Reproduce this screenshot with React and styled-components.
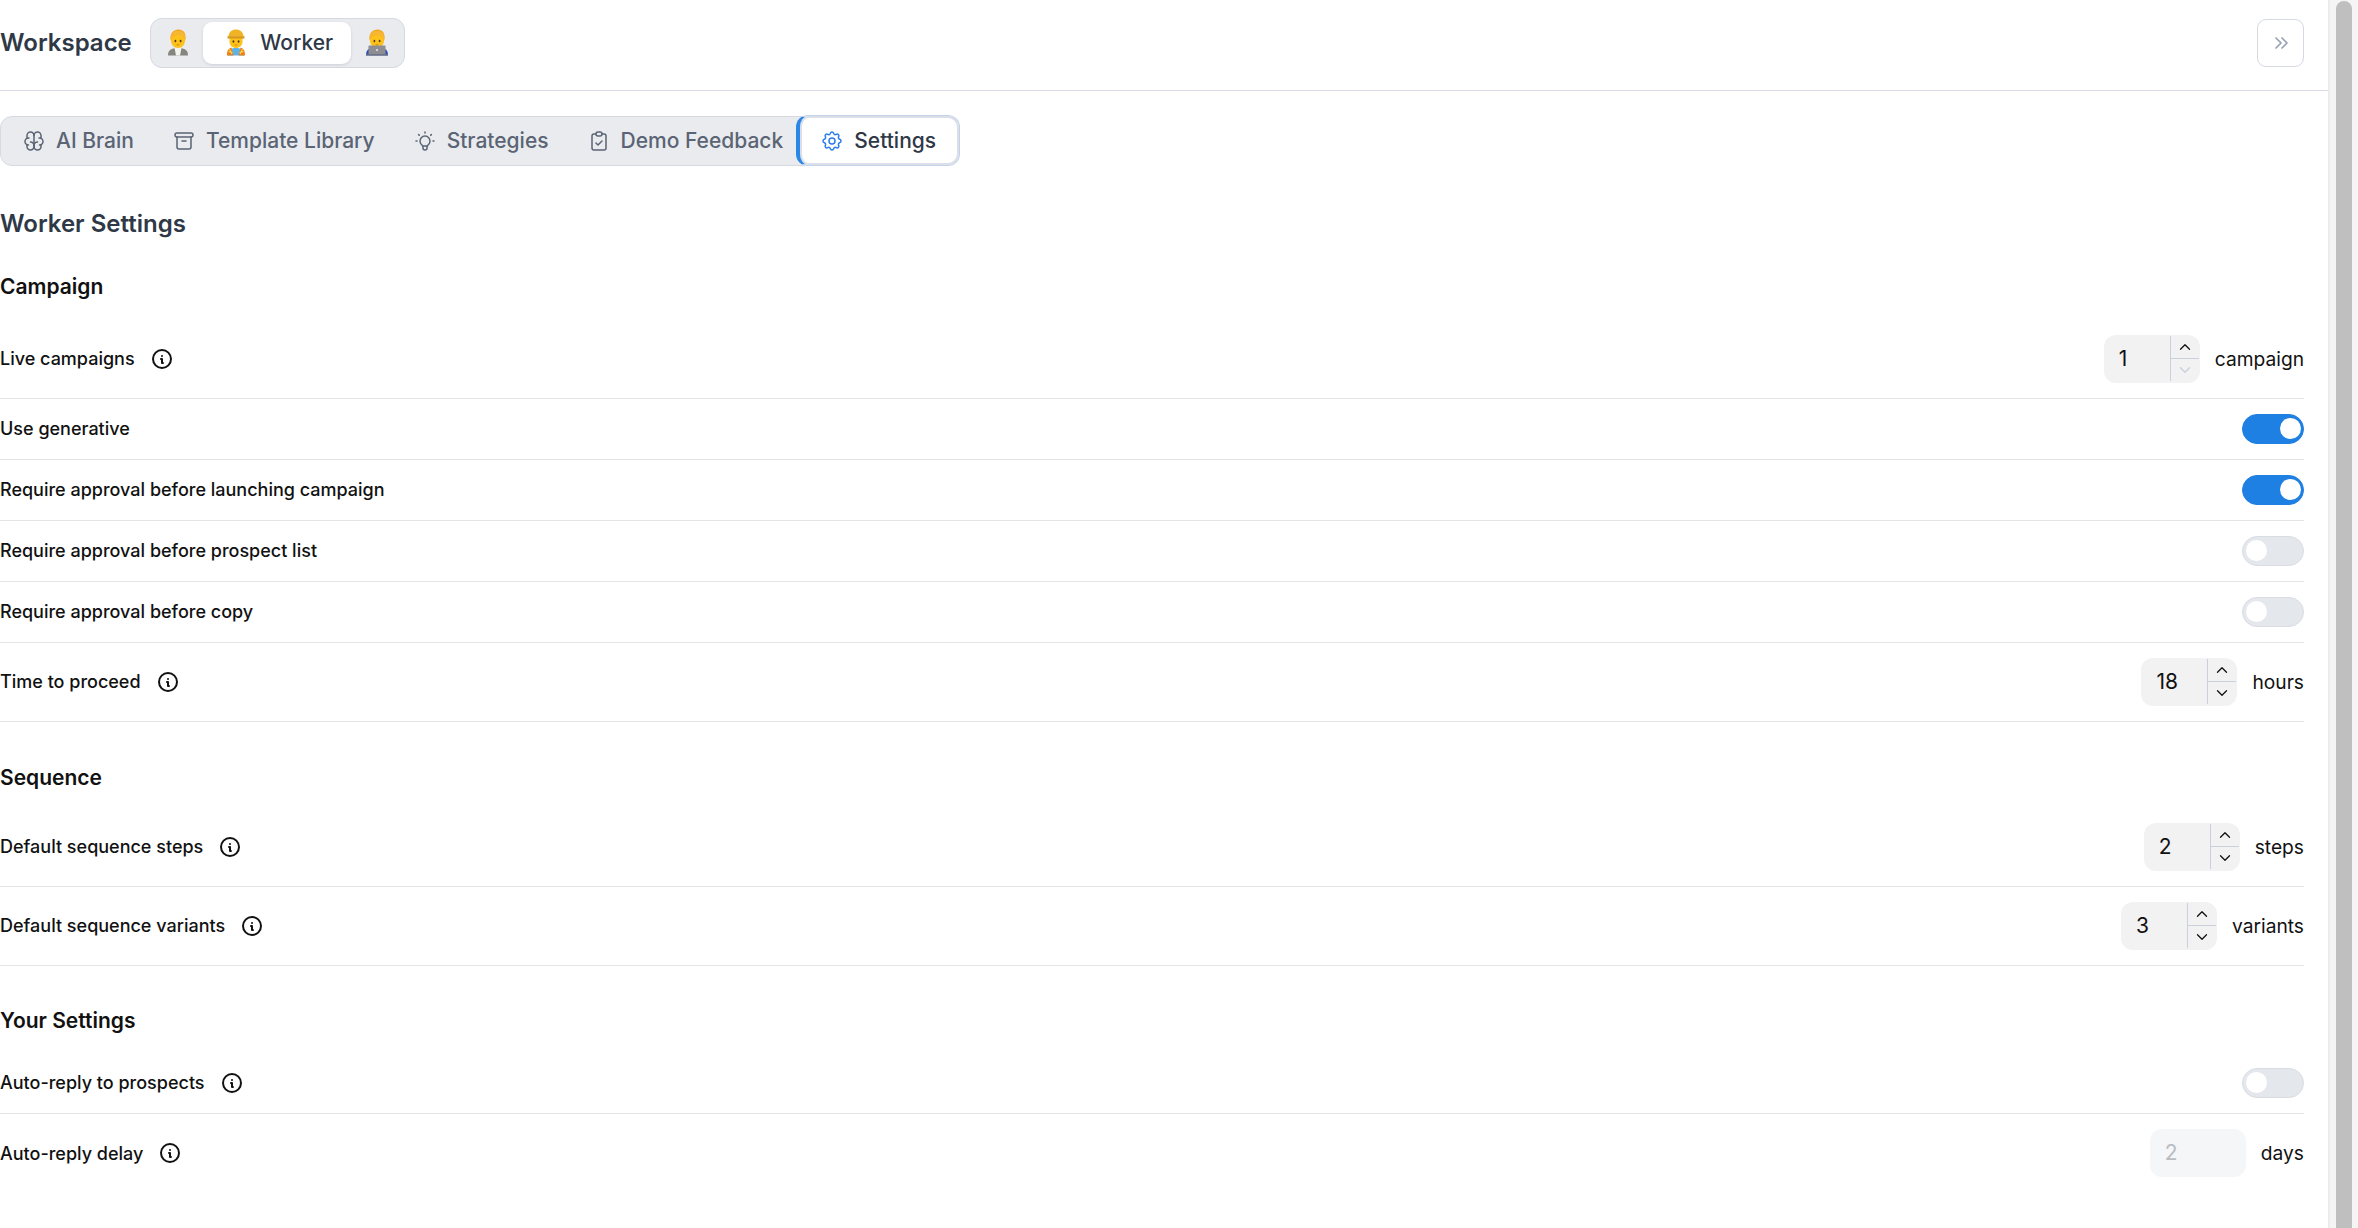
import React from "react";
import styled, { createGlobalStyle } from "styled-components";
import {
  TbArchive,
  TbBrain,
  TbBulb,
  TbChevronDown,
  TbChevronUp,
  TbChevronsRight,
  TbClipboardCheck,
  TbInfoCircle,
  TbSettings
} from "react-icons/tb";

const GlobalStyle = createGlobalStyle`
  html, body {
    margin: 0;
    padding: 0;
    height: 100%;
    background: #fff;
    overflow: hidden;
  }
  body {
    font-family: Inter, "Liberation Sans", sans-serif;
    color: #000;
  }
`;

const Page = styled.div`
  display: flex;
  height: 1228px;
`;

const Main = styled.main`
  flex: 1;
  min-width: 0;
  padding-right: 24px;
`;

const Scrollbar = styled.div`
  box-sizing: border-box;
  width: 30px;
  padding: 1px 6px 0 6px;
  background: #f5f5f5;
  border-left: 2px solid #ebebeb;
`;

const Thumb = styled.div`
  height: 100%;
  border-radius: 8px 8px 0 0;
  background: #bfbfbf;
`;

const Header = styled.header`
  display: flex;
  align-items: center;
  justify-content: space-between;
  box-sizing: border-box;
  height: 91px;
  margin-right: -24px;
  padding: 0 24px 4.5px 0;
  border-bottom: 1.5px solid #d9dae8;
`;

const HeaderLeft = styled.div`
  display: flex;
  align-items: center;
  gap: 18px;
`;

const Title = styled.h1`
  margin: 0;
  font-size: 24px;
  font-weight: 600;
  color: #2f3846;
`;

const Segments = styled.div`
  display: flex;
  align-items: center;
  box-sizing: border-box;
  height: 50px;
  padding: 0 1.5px;
  background: #e9ebef;
  border: 1.5px solid #d5d9e2;
  border-radius: 12px;
`;

const Segment = styled.div`
  display: flex;
  align-items: center;
  gap: 12px;
  height: 42px;
  box-sizing: border-box;
  padding: ${(p) => (p.$active ? "0 18px 0 21px" : "0 13.5px")};
  border-radius: 9px;
  background: ${(p) => (p.$active ? "#fff" : "transparent")};
  box-shadow: ${(p) => (p.$active ? "0 1px 3px rgba(16, 24, 40, 0.12)" : "none")};
  font-size: 21px;
  font-weight: 500;
  color: #2f3846;
`;

const CollapseButton = styled.button`
  display: flex;
  align-items: center;
  justify-content: center;
  width: 47px;
  height: 48px;
  padding: 0;
  background: #fff;
  border: 1.5px solid #d5d9e2;
  border-radius: 9px;
  color: #98a2b3;
  font-size: 24px;
  svg {
    stroke-width: 1.7;
  }
`;

const Tabs = styled.nav`
  display: flex;
  align-items: stretch;
  width: fit-content;
  height: 50px;
  margin-top: 24.5px;
  box-sizing: border-box;
  background: #e9ebef;
  border: 1.5px solid #d5d9e2;
  border-radius: 12px;
`;

const Tab = styled.div`
  display: flex;
  align-items: center;
  gap: 10px;
  padding: 0 ${(p) => (p.$last ? "13px" : "17px")} 0 21px;
  font-size: 21px;
  font-weight: 500;
  color: #5a6474;
  svg {
    font-size: 24px;
    stroke-width: 1.5;
  }
`;

const ActiveTab = styled(Tab)`
  box-sizing: border-box;
  margin: -1.5px -3px -1.5px 0;
  padding: 0 22.5px 0 20px;
  background: #fff;
  color: #2f3846;
  border: 1.5px solid #c3d3ea;
  border-left: 4px solid #2b87e6;
  border-radius: 12px;
  box-shadow: inset 0 0 0 2px #dcdfe7;
  svg {
    color: #2b7de9;
  }
`;

const Heading = styled.h2`
  margin: 43px 0 0;
  font-size: 24px;
  line-height: 30px;
  font-weight: 600;
  color: #2f3846;
`;

const SectionTitle = styled.h3`
  margin: ${(p) => p.$top}px 0 ${(p) => p.$bottom}px;
  font-size: 21px;
  line-height: 30px;
  font-weight: 600;
  color: #111;
`;

const Row = styled.div`
  display: flex;
  align-items: center;
  justify-content: space-between;
  box-sizing: border-box;
  height: ${(p) => p.$height}px;
  border-bottom: ${(p) => (p.$plain ? "none" : "1.5px solid #e3e4e6")};
`;

const LabelWrap = styled.div`
  display: flex;
  align-items: center;
  gap: 15px;
  font-size: 18px;
  font-weight: 500;
  color: #111;
`;

const InfoIcon = styled(TbInfoCircle)`
  font-size: 24px;
  flex-shrink: 0;
  color: #111;
`;

const Control = styled.div`
  display: flex;
  align-items: center;
  gap: 15px;
`;

const Unit = styled.span`
  font-size: 19.2px;
  font-weight: 400;
  color: #111;
`;

const NumberField = styled.div`
  display: flex;
  justify-content: space-between;
  box-sizing: border-box;
  width: 96px;
  height: 48px;
  padding-left: 15px;
  border-radius: 12px;
  background: ${(p) => (p.$disabled ? "#f5f6f8" : "#f2f2f3")};
  color: ${(p) => (p.$disabled ? "#b9bcc2" : "#111")};
  font-size: 21px;
  line-height: 48px;
`;

const Stepper = styled.div`
  display: flex;
  flex-direction: column;
  box-sizing: border-box;
  width: 29px;
  margin: 1px 1px 2px 0;
  border-left: 1.5px solid #c9cfdb;
`;

const StepButton = styled.div`
  flex: 1;
  display: flex;
  align-items: center;
  justify-content: center;
  font-size: 18px;
  color: ${(p) => (p.$muted ? "#c9cfdb" : "#111")};
  svg {
    stroke-width: 1.7;
  }
  & + & {
    border-top: 1.5px solid #c9cfdb;
  }
`;

const Track = styled.div`
  display: flex;
  align-items: center;
  justify-content: ${(p) => (p.$on ? "flex-end" : "flex-start")};
  box-sizing: border-box;
  width: 62px;
  height: 30px;
  padding: 0 2.5px;
  border-radius: 15px;
  background: ${(p) => (p.$on ? "#1f80e3" : "#e4e7ec")};
  border: 1.5px solid ${(p) => (p.$on ? "#1f80e3" : "#d9dde3")};
`;

const Knob = styled.div`
  width: 21px;
  height: 21px;
  border-radius: 50%;
  background: #fff;
`;

const EmojiSvg = styled.svg`
  display: block;
  width: 24px;
  height: 27px;
  flex-shrink: 0;
`;

// blond head shared by the office worker and technologist emojis
function Head() {
  return (
    <>
      <path d="M4.500 10C4 4 7.500 .6 12.500 .6S20 4 19.500 10l-1 3H5.500z" fill="#f2a51a" />
      <path d="M5 11.500C5 7.500 8 6 12 6s7 1.500 7 5.500c0 4.500-3.200 7.500-7 7.500s-7-3-7-7.500z" fill="#fcc21b" />
      <path d="M4.900 11c.4-3 1.800-4.500 4-5.200 3 .6 7.500 0 10.200 5.200C20.200 4.500 16.500 1.800 12.300 1.800 7.500 1.800 3.800 5 4.900 11z" fill="#f7b733" />
      <ellipse cx="9.400" cy="12" rx=".9" ry="1.300" fill="#5a3510" />
      <ellipse cx="14.600" cy="12" rx=".9" ry="1.300" fill="#5a3510" />
      <path d="M10.700 15.800h2.600" stroke="#b9740c" strokeWidth=".8" />
    </>
  );
}

function Manager() {
  return (
    <EmojiSvg viewBox="0 0 24 27" role="img" aria-label="Office worker">
      <path d="M2 26.500c0-5.500 3-7.500 10-7.500s10 2 10 7.500z" fill="#86867f" />
      <path d="M8.500 18.800h7L14 26.500h-4z" fill="#f4f4ef" />
      <Head />
    </EmojiSvg>
  );
}

function Builder() {
  return (
    <EmojiSvg viewBox="0 0 24 27" role="img" aria-label="Construction worker">
      <path d="M4 26.500c0-5.500 2-7.500 8-7.500s8 2 8 7.500z" fill="#5fb2e8" />
      <path d="M3 26.500c0-5 1.200-7 4.500-8l1.800 8zM21 26.500c0-5-1.200-7-4.500-8l-1.800 8z" fill="#ef7f1a" />
      <path d="M4.500 22.500l4 .8M19.500 22.500l-4 .8M5.500 20l2.300 5M18.500 20l-2.300 5" stroke="#f6e04a" strokeWidth="1" />
      <path d="M5.500 9h13v3.500c0 4-3 6.500-6.500 6.500s-6.500-2.500-6.500-6.500z" fill="#fcc21b" />
      <ellipse cx="9.400" cy="12.500" rx=".9" ry="1.300" fill="#5a3510" />
      <ellipse cx="14.600" cy="12.500" rx=".9" ry="1.300" fill="#5a3510" />
      <path d="M10.700 16h2.600" stroke="#b9740c" strokeWidth=".8" />
      <path d="M4.500 7.500C4.800 3 8 .6 12 .6s7.200 2.400 7.500 6.900z" fill="#f0b323" />
      <path d="M3.500 7.200h17v2.300h-17z" fill="#d8961a" />
    </EmojiSvg>
  );
}

function Technologist() {
  return (
    <EmojiSvg viewBox="0 0 24 27" role="img" aria-label="Technologist">
      <path d="M1 26.500c0-4 1.500-7 5-7h12c3.500 0 5 3 5 7z" fill="#2f4fb0" />
      <Head />
      <rect x="3.500" y="16.500" width="17" height="9" rx=".8" fill="#8d8d92" />
      <circle cx="12" cy="21" r="1" fill="#e8e8ea" />
      <path d="M1 25.200h22v1.300H1z" fill="#77777c" />
    </EmojiSvg>
  );
}

function Toggle({ on }) {
  return (
    <Track $on={on}>
      <Knob />
    </Track>
  );
}

function NumberInput({ value, unit, disabled, downMuted }) {
  return (
    <Control>
      <NumberField $disabled={disabled}>
        {value}
        {!disabled && (
          <Stepper>
            <StepButton>
              <TbChevronUp />
            </StepButton>
            <StepButton $muted={downMuted}>
              <TbChevronDown />
            </StepButton>
          </Stepper>
        )}
      </NumberField>
      <Unit>{unit}</Unit>
    </Control>
  );
}

function Label({ children, info }) {
  return (
    <LabelWrap>
      {children}
      {info && <InfoIcon />}
    </LabelWrap>
  );
}

export default function App() {
  return (
    <>
      <GlobalStyle />
      <Page>
        <Main>
          <Header>
            <HeaderLeft>
              <Title>Workspace</Title>
              <Segments>
                <Segment>
                  <Manager />
                </Segment>
                <Segment $active>
                  <Builder />
                  Worker
                </Segment>
                <Segment>
                  <Technologist />
                </Segment>
              </Segments>
            </HeaderLeft>
            <CollapseButton>
              <TbChevronsRight />
            </CollapseButton>
          </Header>

          <Tabs>
            <Tab>
              <TbBrain />
              AI Brain
            </Tab>
            <Tab>
              <TbArchive />
              Template Library
            </Tab>
            <Tab>
              <TbBulb />
              Strategies
            </Tab>
            <Tab $last>
              <TbClipboardCheck />
              Demo Feedback
            </Tab>
            <ActiveTab>
              <TbSettings />
              Settings
            </ActiveTab>
          </Tabs>

          <Heading>Worker Settings</Heading>

          <SectionTitle $top={33} $bottom={18}>Campaign</SectionTitle>
          <Row $height={79}>
            <Label info>Live campaigns</Label>
            <NumberInput value="1" unit="campaign" downMuted />
          </Row>
          <Row $height={61}>
            <Label>Use generative</Label>
            <Toggle on />
          </Row>
          <Row $height={61}>
            <Label>Require approval before launching campaign</Label>
            <Toggle on />
          </Row>
          <Row $height={61}>
            <Label>Require approval before prospect list</Label>
            <Toggle />
          </Row>
          <Row $height={61}>
            <Label>Require approval before copy</Label>
            <Toggle />
          </Row>
          <Row $height={79}>
            <Label info>Time to proceed</Label>
            <NumberInput value="18" unit="hours" />
          </Row>

          <SectionTitle $top={41} $bottom={15}>Sequence</SectionTitle>
          <Row $height={79}>
            <Label info>Default sequence steps</Label>
            <NumberInput value="2" unit="steps" />
          </Row>
          <Row $height={79}>
            <Label info>Default sequence variants</Label>
            <NumberInput value="3" unit="variants" />
          </Row>

          <SectionTitle $top={40} $bottom={17}>Your Settings</SectionTitle>
          <Row $height={61}>
            <Label info>Auto-reply to prospects</Label>
            <Toggle />
          </Row>
          <Row $height={79} $plain>
            <Label info>Auto-reply delay</Label>
            <NumberInput value="2" unit="days" disabled />
          </Row>
        </Main>
        <Scrollbar>
          <Thumb />
        </Scrollbar>
      </Page>
    </>
  );
}
